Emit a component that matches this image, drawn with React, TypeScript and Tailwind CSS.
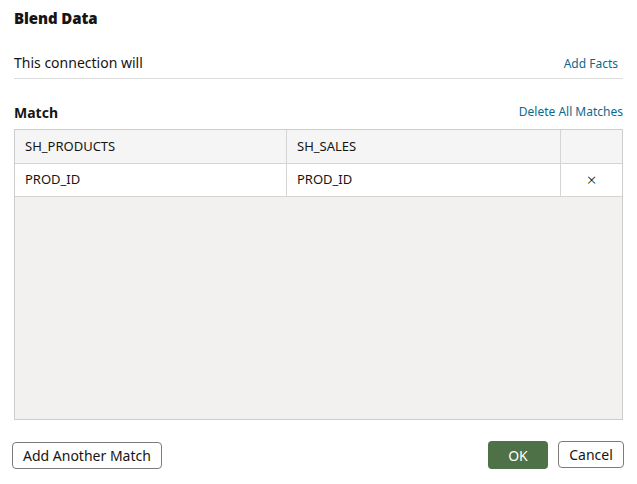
export default function App() {
  return (
    <div className="w-[637px] h-[484px] bg-white text-[#161513] font-['Noto_Sans',sans-serif] flex flex-col">
      <div className="px-[14px] pt-[8px] h-[32px]">
        <h1 className="text-[15px] font-black leading-[20px] tracking-[-0.1px]">Blend Data</h1>
      </div>
      <div className="mx-[14px] mt-[20px] h-[27px] border-b border-[#dcdcdc] flex items-start justify-between pr-[5px]">
        <span className="text-[14px] leading-[22px]">This connection will</span>
        <a className="text-[12px] leading-[24px] text-[#0b6b8c]">Add Facts</a>
      </div>
      <div className="mx-[14px] mt-[23px] flex items-center justify-between h-[20px]">
        <span className="text-[14px] font-bold">Match</span>
        <a className="text-[12px] text-[#0b6b8c]">Delete All Matches</a>
      </div>
      <div className="mx-[14px] mt-[7px] h-[291px] border border-[#cfcdca] bg-[#f2f1ef] flex flex-col">
        <div className="grid grid-cols-[272px_274px_1fr] h-[34px] bg-[#f5f5f5] border-b border-[#d6d4d1] text-[13px]">
          <div className="border-r border-[#d6d4d1] px-[10px] flex items-center">SH_PRODUCTS</div>
          <div className="border-r border-[#d6d4d1] px-[10px] flex items-center">SH_SALES</div>
          <div></div>
        </div>
        <div className="grid grid-cols-[272px_274px_1fr] h-[33px] bg-white border-b border-[#d6d4d1] text-[13px]">
          <div className="border-r border-[#d6d4d1] px-[10px] flex items-center">PROD_ID</div>
          <div className="border-r border-[#d6d4d1] px-[10px] flex items-center">PROD_ID</div>
          <div className="flex items-center justify-center text-[17px] font-light">×</div>
        </div>
      </div>
      <div className="mx-[12px] mt-[21px] flex items-center justify-between">
        <button className="h-[27px] px-[10px] border border-[#7d7b78] rounded-[4px] bg-white text-[14px]">Add Another Match</button>
        <div className="flex gap-[10px] mr-[1px]">
          <button className="h-[28px] w-[60px] rounded-[4px] bg-[#4f7148] text-white text-[14px]">OK</button>
          <button className="h-[27px] w-[66px] border border-[#7d7b78] rounded-[4px] bg-white text-[14px]">Cancel</button>
        </div>
      </div>
    </div>
  )
}
